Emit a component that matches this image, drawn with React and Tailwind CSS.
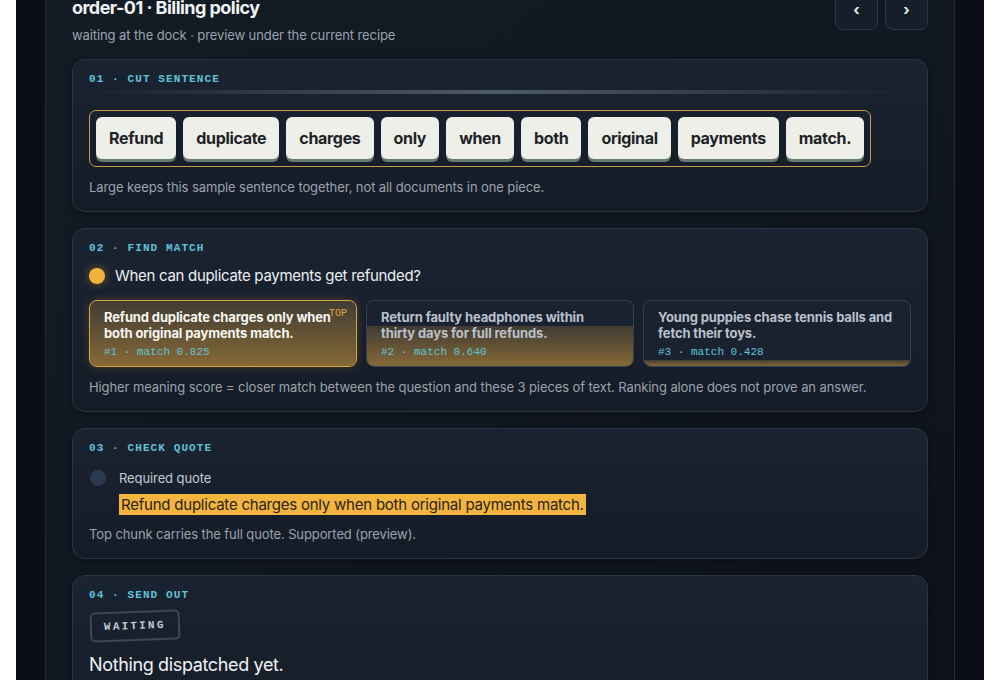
import React from "react";

const words = ["Refund", "duplicate", "charges", "only", "when", "both", "original", "payments", "match."];

const chunks = [
  { lines: ["Refund duplicate charges only when", "both original payments match."], meta: "#1 · match 0.825", fill: 100, top: true },
  { lines: ["Return faulty headphones within", "thirty days for full refunds."], meta: "#2 · match 0.640", fill: 61, top: false },
  { lines: ["Young puppies chase tennis balls and", "fetch their toys."], meta: "#3 · match 0.428", fill: 9, top: false },
];

function Label({ children }) {
  return (
    <div className="h-[16px] leading-[16px] text-[11px] font-bold tracking-[0.1em] text-[#5fc3d8] [font-family:'Liberation_Mono',monospace]">
      {children}
    </div>
  );
}

function Card({ children }) {
  return (
    <div className="rounded-[13px] border border-[#2a3443] bg-gradient-to-b from-[#1a2331] to-[#151c27] px-[16px] pt-[11px] pb-[14px] shadow-[0_2px_10px_rgba(0,0,0,0.35)]">
      {children}
    </div>
  );
}

export default function App() {
  return (
    <div className="w-[1000px] h-[680px] overflow-hidden bg-white px-[16px] [font-family:Inter,'Liberation_Sans',sans-serif]">
      <div className="flex h-full flex-col bg-[#0b0f15] px-[29px]">
        <div className="flex h-full flex-col border-x border-[#222b36] bg-gradient-to-br from-[#131b25] via-[#111822] to-[#0d1219] px-[26px]">
          <div className="-mt-[4px] flex items-start justify-between">
            <div>
              <div className="h-[24px] leading-[24px] text-[18px] font-bold tracking-[-0.03em] text-[#f1f3f5]">
                order-01 · Billing policy
              </div>
              <div className="mt-[5px] h-[20px] leading-[20px] text-[13px] tracking-[-0.1px] text-[#9aa3ae]">
                waiting at the dock · preview under the current recipe
              </div>
            </div>
            <div className="-mt-[10px] flex gap-[7px]">
              <div className="flex h-[44px] w-[43px] items-end justify-center rounded-[8px] border border-[#2c3644] bg-[#161e29] pb-[8px] text-[15px] font-bold text-[#e8ecf0]">
                ‹
              </div>
              <div className="flex h-[44px] w-[43px] items-end justify-center rounded-[8px] border border-[#2c3644] bg-[#161e29] pb-[8px] text-[15px] font-bold text-[#e8ecf0]">
                ›
              </div>
            </div>
          </div>

          <div className="mt-[14px] flex flex-col gap-[16px]">
            <Card>
              <Label>01 · CUT SENTENCE</Label>
              <div className="mt-[3px] h-[4px] w-[815px] rounded-full bg-gradient-to-r from-transparent via-[#4d5a69] to-transparent" />
              <div className="mt-[16px] flex">
                <div className="flex gap-[7px] rounded-[7px] border border-[#c99a44] p-[6px] pb-[4px]">
                  {words.map((w) => (
                    <div
                      key={w}
                      className="mb-[3px] h-[42px] rounded-[6px] bg-[#eeefe8] px-[13px] text-[16px] font-bold leading-[42px] tracking-[-0.02em] text-[#1e2327] shadow-[0_3px_0_#667a70]"
                    >
                      {w}
                    </div>
                  ))}
                </div>
              </div>
              <div className="mt-[10px] h-[20px] leading-[20px] text-[13px] tracking-[-0.1px] text-[#9aa3ae]">
                Large keeps this sample sentence together, not all documents in one piece.
              </div>
            </Card>

            <Card>
              <Label>02 · FIND MATCH</Label>
              <div className="mt-[9px] flex h-[22px] items-center gap-[10px]">
                <div className="h-[16px] w-[16px] rounded-full bg-[#f2b23d] shadow-[0_0_10px_rgba(242,178,61,0.45)]" />
                <div className="text-[15px] leading-[22px] tracking-[-0.02em] text-[#eceff2]">When can duplicate payments get refunded?</div>
              </div>
              <div className="mt-[13px] grid grid-cols-3 gap-[9px]">
                {chunks.map((c) => (
                  <div
                    key={c.meta}
                    className={
                      c.top
                        ? "relative h-[67px] overflow-hidden rounded-[8px] border border-[#d7a544] bg-[#1b2330] shadow-[0_0_8px_rgba(215,165,68,0.25)]"
                        : "relative h-[67px] overflow-hidden rounded-[8px] border border-[#334052] bg-[#1a2230]"
                    }
                  >
                    <div
                      className="absolute inset-x-0 bottom-0 bg-gradient-to-b from-[rgba(200,150,60,0.22)] to-[rgba(205,152,60,0.6)]"
                      style={{ height: `${c.fill}%` }}
                    />
                    <div className="relative px-[14px] pt-[8px]">
                      <div
                        className={
                          c.top
                            ? "h-[32px] text-[13px] font-bold leading-[16px] tracking-[-0.01em] text-[#f6f6f2]"
                            : "h-[32px] text-[13px] font-bold leading-[16px] tracking-[-0.01em] text-[#b9c0ca]"
                        }
                      >
                        {c.lines.map((l) => (
                          <div key={l} className="whitespace-nowrap">
                            {l}
                          </div>
                        ))}
                      </div>
                      <div className="mt-[4px] h-[14px] text-[11px] leading-[14px] text-[#5fc3d8] [font-family:'Liberation_Mono',monospace]">
                        {c.meta}
                      </div>
                    </div>
                    {c.top && (
                      <div className="absolute right-[9px] top-[7px] text-[10px] leading-[12px] text-[#e0a73f] [font-family:'Liberation_Mono',monospace]">
                        TOP
                      </div>
                    )}
                  </div>
                ))}
              </div>
              <div className="mt-[10px] h-[20px] leading-[20px] text-[13px] tracking-[-0.1px] text-[#9aa3ae]">
                Higher meaning score = closer match between the question and these 3 pieces of text. Ranking alone does not prove an answer.
              </div>
            </Card>

            <Card>
              <Label>03 · CHECK QUOTE</Label>
              <div className="mt-[12px] flex h-[20px] items-center gap-[13px]">
                <div className="ml-[1px] h-[16px] w-[16px] rounded-full bg-[#2a3950]" />
                <div className="text-[13px] leading-[20px] tracking-[-0.1px] text-[#c5cbd3]">Required quote</div>
              </div>
              <div className="mt-[5px] h-[22px] pl-[30px] leading-[22px]">
                <span className="bg-[#f3b53f] px-[2px] py-[1px] text-[15px] tracking-[-0.015em] text-[#2a2312]">
                  Refund duplicate charges only when both original payments match.
                </span>
              </div>
              <div className="mt-[9px] h-[20px] leading-[20px] text-[13px] tracking-[-0.1px] text-[#9aa3ae]">
                Top chunk carries the full quote. Supported (preview).
              </div>
            </Card>

            <Card>
              <Label>04 · SEND OUT</Label>
              <div className="mt-[8px] flex">
                <div className="ml-[1px] flex h-[30px] -rotate-2 items-center rounded-[5px] border-2 border-[#3a4858] px-[12px] text-[11px] font-bold tracking-[0.2em] text-[#c3c9d1] [font-family:'Liberation_Mono',monospace]">
                  WAITING
                </div>
              </div>
              <div className="mt-[11px] h-[26px] text-[18px] leading-[26px] tracking-[-0.02em] text-[#f1f3f5]">Nothing dispatched yet.</div>
              <div className="h-[40px]" />
            </Card>
          </div>
        </div>
      </div>
    </div>
  );
}
